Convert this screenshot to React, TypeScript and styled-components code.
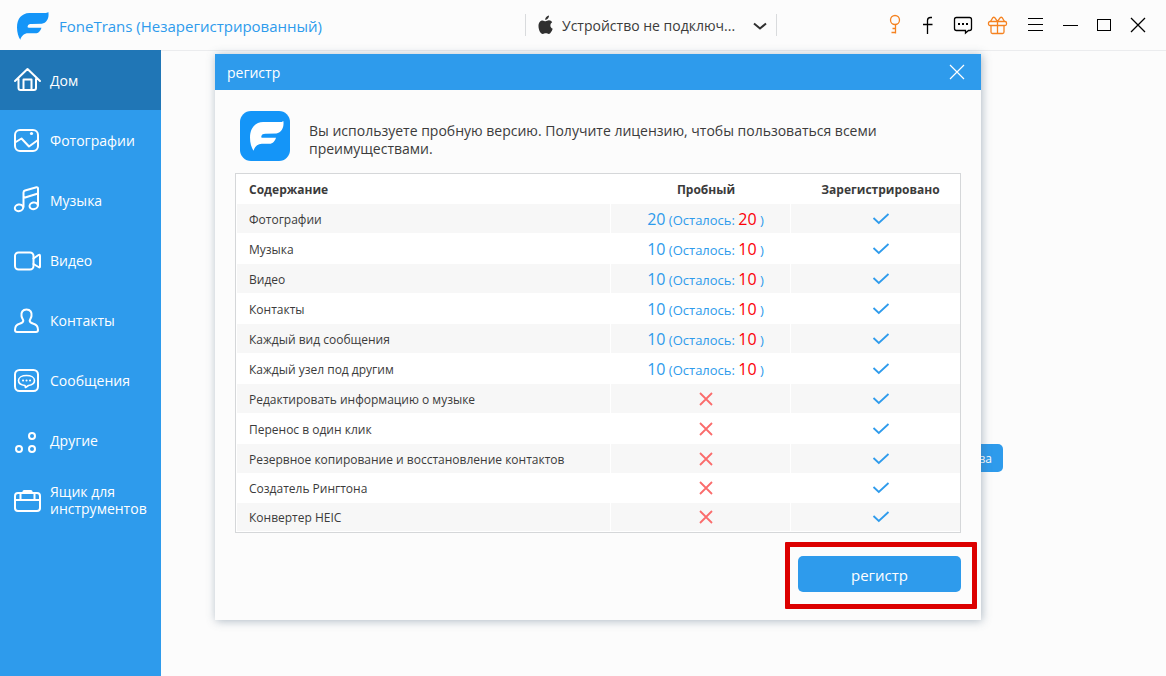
import React from "react";
import styled, { createGlobalStyle } from "styled-components";

const blue = "#2e9bec";
const ink = "#3b3b3b";

const GlobalStyle = createGlobalStyle`
  *, *::before, *::after { box-sizing: border-box; }
  body {
    margin: 0;
    background: #fcfcfc;
    color: ${ink};
    font-family: "Open Sans", "Noto Sans", sans-serif;
    font-size: 14px;
  }
  button, select { font-family: inherit; }
  svg { display: block; flex: none; }
`;

const Window = styled.div`
  min-height: 100vh;
  display: flex;
  flex-direction: column;
`;

const TitleBar = styled.header`
  display: flex;
  align-items: center;
  height: 50px;
`;

const Brand = styled.div`
  flex: 1;
  display: flex;
  align-items: center;
  gap: 10px;
  padding: 2px 0 0 17px;
`;

const BrandName = styled.h1`
  margin: 0;
  font-size: 15px;
  line-height: 24px;
  font-weight: 400;
  color: ${blue};
  white-space: nowrap;
`;

const DevicePicker = styled.label`
  width: 252px;
  height: 22px;
  display: flex;
  align-items: center;
  gap: 8px;
  padding: 0 8px 0 12px;
  border: solid #d9dbdd;
  border-width: 0 1px;
`;

const DeviceSelect = styled.select`
  flex: 1;
  min-width: 0;
  padding: 2px 0 0;
  border: 0;
  background: none;
  appearance: none;
  color: ${ink};
  font-size: 14px;
  line-height: 20px;
`;

const Tools = styled.div`
  width: 389px;
  display: flex;
  justify-content: flex-end;
  padding-right: 11px;
`;

const ToolGroup = styled.div<{ $gap: number }>`
  display: flex;
  gap: ${(p) => p.$gap}px;
  margin-left: 4px;
`;

const ToolButton = styled.button`
  width: 34px;
  height: 34px;
  padding: 0;
  border: 0;
  background: none;
  display: grid;
  place-items: center;
`;

const Body = styled.div`
  flex: 1;
  display: flex;
`;

const Sidebar = styled.nav`
  width: 161px;
  background: ${blue};
`;

const NavLink = styled.a<{ $active?: boolean }>`
  display: flex;
  align-items: center;
  gap: 8px;
  height: 60px;
  padding-left: 12px;
  background: ${(p) => (p.$active ? "#2076b6" : "transparent")};
  color: #fff;
  font-size: 14px;
  line-height: 17px;
  text-decoration: none;
`;

const Content = styled.main`
  flex: 1;
  display: flex;
  justify-content: flex-end;
  align-items: flex-start;
  border-top: 1px solid #ebecee;
  padding: 393px 163px 0 0;
`;

const DeviceHelp = styled.button`
  height: 28px;
  padding: 0 11px;
  border: 0;
  border-radius: 5px;
  background: ${blue};
  color: #fff;
  font-size: 12px;
`;

const Overlay = styled.div`
  position: absolute;
  inset: 0;
  display: grid;
  place-items: center;
  padding: 0 0 2px 30px;
`;

const Dialog = styled.section`
  width: 766px;
  background: #fcfcfc;
  box-shadow: 1px 1px 9px rgba(70, 95, 120, 0.42);
`;

const DialogHeader = styled.header`
  display: flex;
  align-items: center;
  justify-content: space-between;
  height: 36px;
  padding: 0 7px 0 12px;
  background: ${blue};
  color: #fff;
`;

const DialogTitle = styled.h2`
  margin: 0;
  padding-top: 2px;
  font-size: 14px;
  line-height: 20px;
  font-weight: 400;
`;

const Intro = styled.div`
  display: flex;
  align-items: center;
  gap: 19px;
  padding: 21px 80px 12px 25px;
`;

const AppIcon = styled.div`
  flex: none;
  display: grid;
  place-items: center;
  width: 50px;
  height: 50px;
  padding-left: 4px;
  border-radius: 11px;
  background: #1495f8;
`;

const IntroText = styled.p`
  margin: 7px 0 0;
  font-size: 14px;
  line-height: 18px;
`;

const Table = styled.table`
  width: 726px;
  margin: 0 20px;
  table-layout: fixed;
  border: 1px solid #d5d7d9;
  border-collapse: separate;
  border-spacing: 0;
  background: #fff;
  font-size: 12px;
  line-height: 18px;
`;

const Row = styled.tr<{ $short?: boolean }>`
  height: ${(p) => (p.$short ? 29 : 30)}px;
  &:nth-child(odd) td {
    background-color: #f7f7f7;
  }
`;

const HeadCell = styled.th<{ $width?: number }>`
  width: ${(p) => (p.$width ? `${p.$width}px` : "auto")};
  height: 30px;
  padding: 2px 0 0 10px;
  text-align: center;
  font-weight: 700;
  &:first-child {
    padding-left: 13px;
    text-align: left;
  }
`;

const Cell = styled.td<{ $mark?: boolean }>`
  padding: ${(p) => (p.$mark ? 0 : 2)}px 0 0 10px;
  text-align: center;
  color: ${blue};
  font-size: 13px;
  background-clip: padding-box;
  border: solid #fff;
  border-width: 0 1px 1px 0;
  svg {
    margin: 0 auto;
  }
  &:first-child {
    padding-left: 12px;
    border-left-width: 1px;
    text-align: left;
    color: ${ink};
    font-size: 12px;
  }
  &:last-child {
    border-right-width: 0;
  }
`;

const Amount = styled.span<{ $left?: boolean }>`
  font-size: 16px;
  color: ${(p) => (p.$left ? "#fb0007" : "inherit")};
`;

const DialogFooter = styled.footer`
  display: flex;
  justify-content: flex-end;
  padding: 23px 20px 28px;
`;

const Highlight = styled.div`
  position: relative;
  &::after {
    content: "";
    position: absolute;
    inset: -14px -16px -17px -13px;
    border: 5px solid #dc0000;
    border-radius: 1px;
    pointer-events: none;
  }
`;

const RegisterButton = styled.button`
  display: block;
  width: 163px;
  height: 36px;
  padding: 2px 0 0;
  border: 0;
  border-radius: 5px;
  background: ${blue};
  color: #fff;
  font-size: 15px;
`;

const Wing = ({ width, height, fill }: { width: number; height: number; fill: string }) => (
  <svg width={width} height={height} viewBox="0 0 98 84" preserveAspectRatio="none" fill={fill}>
    <path d="M96 0C92 4 86 3 78 3L38 3C14 4 0 20 0 46C0 62 4 74 10 83C14 72 22 64 34 64L56 64C66 64 72 56 75 47L36 47C32 47 32 44 33 42C34 38 38 36 44 36L76 35C92 33 99 16 96 0Z" />
  </svg>
);

const NavIcon = ({ children }: { children: React.ReactNode }) => (
  <svg width="30" height="30" viewBox="0 0 30 30" fill="none" stroke="#fff" strokeWidth="2" strokeLinecap="round" strokeLinejoin="round">
    {children}
  </svg>
);

const navItems = [
  {
    label: "Дом",
    icon: <path d="M3 16L15.500 4L28 16M6.500 14V23Q6.500 25 8.500 25H22Q24 25 24 23V14M11.500 25V14.500H19.500V25" />,
  },
  {
    label: "Фотографии",
    icon: (
      <>
        <rect x="3" y="5" width="23" height="21" rx="5" />
        <path d="M3 17.500L9.500 13.500L17 21.500L26 15" />
        <circle cx="19.500" cy="8.500" r="1.600" fill="#fff" stroke="none" />
      </>
    ),
  },
  {
    label: "Музыка",
    icon: (
      <>
        <ellipse cx="7" cy="22.800" rx="4.200" ry="3.300" transform="rotate(-12 7 22.800)" />
        <ellipse cx="21.700" cy="20.800" rx="4.200" ry="3.300" transform="rotate(-12 21.700 20.800)" />
        <path d="M11.500 22V7.500Q11.500 6 13 5.500L24.500 2.200Q26 2 26 3.500V20M11.500 13L26 8.500" />
      </>
    ),
  },
  {
    label: "Видео",
    icon: (
      <>
        <rect x="3" y="7.500" width="18.500" height="17" rx="3.500" />
        <path d="M21.500 13.500L26.500 10Q28 9 28 11V21.500Q28 23 26.500 22L21.500 19" />
      </>
    ),
  },
  {
    label: "Контакты",
    icon: (
      <path d="M14.500 4.500C10.500 4.500 9 7.500 9.500 11C9.800 13 11 14 11.300 15.500C11.500 17.500 10 18 7.500 18.800C4 19.800 3 22 3 25Q3 27 5 27H24Q26 27 26 25C26 22 25 19.800 21.500 18.800C19 18 17.500 17.500 17.700 15.500C18 14 19.200 13 19.500 11C20 7.500 18.500 4.500 14.500 4.500Z" />
    ),
  },
  {
    label: "Сообщения",
    icon: (
      <>
        <rect x="3" y="5" width="23" height="21" rx="4.500" />
        <path strokeWidth="1.600" d="M13 20.500C9 20 6.500 18 6.500 15.500C6.500 12.500 10 10.500 14.500 10.500C19 10.500 22.500 12.500 22.500 15.500C22.500 18 20 20 16.500 20.500L13.500 22.500Z" />
        <path d="M11 15.500H11.100M14.500 15.500H14.600M18 15.500H18.100" />
      </>
    ),
  },
  {
    label: "Другие",
    icon: (
      <>
        <circle cx="20" cy="11" r="3" />
        <circle cx="7" cy="24" r="3" />
        <circle cx="20" cy="24" r="3" />
      </>
    ),
  },
  {
    label: "Ящик для инструментов",
    icon: (
      <>
        <rect x="3" y="8" width="25" height="18" rx="3" />
        <path d="M3 15H28M8.500 15V9M22.500 15V9" />
        <path strokeWidth="3" d="M12 6.500H19" />
      </>
    ),
  },
];

const ToolIcon = ({ color = "#000", width = 1.3, children }: { color?: string; width?: number; children: React.ReactNode }) => (
  <svg width="24" height="24" viewBox="0 0 24 24" fill="none" stroke={color} strokeWidth={width}>
    {children}
  </svg>
);

const Check = () => (
  <svg width="18" height="14" viewBox="0 0 18 14" fill="none" stroke={blue} strokeWidth="1.800">
    <path d="M1.500 6L6.800 11L16.500 2" />
  </svg>
);

const Cross = () => (
  <svg width="14" height="14" viewBox="0 0 14 14" fill="none" stroke="#fa6c6c" strokeWidth="1.800">
    <path d="M1 1L13 13M13 1L1 13" />
  </svg>
);

const features: { name: string; trial?: number }[] = [
  { name: "Фотографии", trial: 20 },
  { name: "Музыка", trial: 10 },
  { name: "Видео", trial: 10 },
  { name: "Контакты", trial: 10 },
  { name: "Каждый вид сообщения", trial: 10 },
  { name: "Каждый узел под другим", trial: 10 },
  { name: "Редактировать информацию о музыке" },
  { name: "Перенос в один клик" },
  { name: "Резервное копирование и восстановление контактов" },
  { name: "Создатель Рингтона" },
  { name: "Конвертер HEIC" },
];

export default function App() {
  return (
    <Window>
      <GlobalStyle />
      <TitleBar>
        <Brand>
          <Wing width={32} height={28} fill="#1495f8" />
          <BrandName>FoneTrans (Незарегистрированный)</BrandName>
        </Brand>
        <DevicePicker>
          <svg width="16" height="20" viewBox="0 0 16 20" fill="#303030">
            <path d="M11 0.500C11.200 2.700 9.300 4.900 7.200 4.900C7 2.800 9 0.700 11 0.500ZM7.500 6.200C8.500 6.200 9.500 5.300 11 5.300C12.300 5.300 13.600 6.100 14.200 7.200C11.500 8.800 12 12.600 14.700 13.800C14 15.800 12.500 19 10.800 19C9.700 19 9.200 18.300 7.800 18.300C6.400 18.300 6 19 4.800 19C2.500 19 0.500 14.700 0.500 11C0.500 7.500 2.400 5.400 4.400 5.400C5.700 5.400 6.800 6.200 7.500 6.200Z" />
          </svg>
          <DeviceSelect aria-label="Устройство">
            <option>Устройство не подключ...</option>
          </DeviceSelect>
          <svg width="16" height="16" viewBox="0 0 16 16" fill="none" stroke="#303030" strokeWidth="2">
            <path d="M2 6.500L8 11.500L14 6.500" />
          </svg>
        </DevicePicker>
        <Tools>
          <ToolGroup $gap={1}>
            <ToolButton aria-label="Ключ">
              <ToolIcon color="#f58220">
                <circle cx="14" cy="7" r="4.500" />
                <path d="M14.500 11.500V20.500M14 15.500H11.500M14 19.500H10.500" />
              </ToolIcon>
            </ToolButton>
            <ToolButton aria-label="Facebook">
              <ToolIcon>
                <path d="M16 4.500H14.500Q11.500 4.500 11.500 7.500V21M7 11.500H16.500" />
              </ToolIcon>
            </ToolButton>
            <ToolButton aria-label="Отзыв">
              <ToolIcon>
                <path d="M5.500 4.500H18.500Q20.500 4.500 20.500 6.500V15.500Q20.500 17.500 18.500 17.500H17.500L14.500 20V17.500H5.500Q3.500 17.500 3.500 15.500V6.500Q3.500 4.500 5.500 4.500Z" />
                <path strokeWidth="2" d="M7 11H9M11 11H13M15 11H17" />
              </ToolIcon>
            </ToolButton>
            <ToolButton aria-label="Подарок">
              <ToolIcon color="#f58220">
                <rect x="2.500" y="8.500" width="18" height="4" rx="1.500" />
                <path d="M5 12.500V19Q5 20.500 6.500 20.500H16.500Q18 20.500 18 19V12.500M11.500 8.500V20.500M11.500 8.500L8.800 4.700Q7.800 3.700 6.800 4.700L4.500 8.500M11.500 8.500L14.200 4.700Q15.200 3.700 16.200 4.700L18.500 8.500" />
              </ToolIcon>
            </ToolButton>
          </ToolGroup>
          <ToolGroup $gap={0}>
            <ToolButton aria-label="Меню">
              <ToolIcon width={1}>
                <path d="M4 5.500H19M4 11.500H19M4 17.500H19" />
              </ToolIcon>
            </ToolButton>
            <ToolButton aria-label="Свернуть">
              <ToolIcon width={1}>
                <path d="M5 12.500H20" />
              </ToolIcon>
            </ToolButton>
            <ToolButton aria-label="Развернуть">
              <ToolIcon width={1}>
                <rect x="5.500" y="6.500" width="13" height="11" />
              </ToolIcon>
            </ToolButton>
            <ToolButton aria-label="Закрыть">
              <ToolIcon width={1.3}>
                <path d="M5 5L19 19M19 5L5 19" />
              </ToolIcon>
            </ToolButton>
          </ToolGroup>
        </Tools>
      </TitleBar>

      <Body>
        <Sidebar>
          {navItems.map((item, i) => (
            <NavLink key={item.label} href="#" $active={i === 0}>
              <NavIcon>{item.icon}</NavIcon>
              {item.label}
            </NavLink>
          ))}
        </Sidebar>
        <Content>
          <DeviceHelp>устройства</DeviceHelp>
        </Content>
      </Body>

      <Overlay>
        <Dialog role="dialog" aria-labelledby="register-title">
          <DialogHeader>
            <DialogTitle id="register-title">регистр</DialogTitle>
            <ToolButton aria-label="Закрыть окно">
              <ToolIcon color="#fff" width={1.2}>
                <path d="M5 5L19 19M19 5L5 19" />
              </ToolIcon>
            </ToolButton>
          </DialogHeader>
          <Intro>
            <AppIcon>
              <Wing width={34} height={30} fill="#fff" />
            </AppIcon>
            <IntroText>
              Вы используете пробную версию. Получите лицензию, чтобы пользоваться всеми преимуществами.
            </IntroText>
          </Intro>
          <Table>
            <thead>
              <tr>
                <HeadCell>Содержание</HeadCell>
                <HeadCell $width={180}>Пробный</HeadCell>
                <HeadCell $width={169}>Зарегистрировано</HeadCell>
              </tr>
            </thead>
            <tbody>
              {features.map((f, i) => (
                <Row key={f.name} $short={i >= features.length - 2}>
                  <Cell>{f.name}</Cell>
                  <Cell $mark={!f.trial}>
                    {f.trial ? (
                      <>
                        <Amount>{f.trial}</Amount> (Осталось: <Amount $left>{f.trial}</Amount> )
                      </>
                    ) : (
                      <Cross />
                    )}
                  </Cell>
                  <Cell $mark>
                    <Check />
                  </Cell>
                </Row>
              ))}
            </tbody>
          </Table>
          <DialogFooter>
            <Highlight>
              <RegisterButton>регистр</RegisterButton>
            </Highlight>
          </DialogFooter>
        </Dialog>
      </Overlay>
    </Window>
  );
}
